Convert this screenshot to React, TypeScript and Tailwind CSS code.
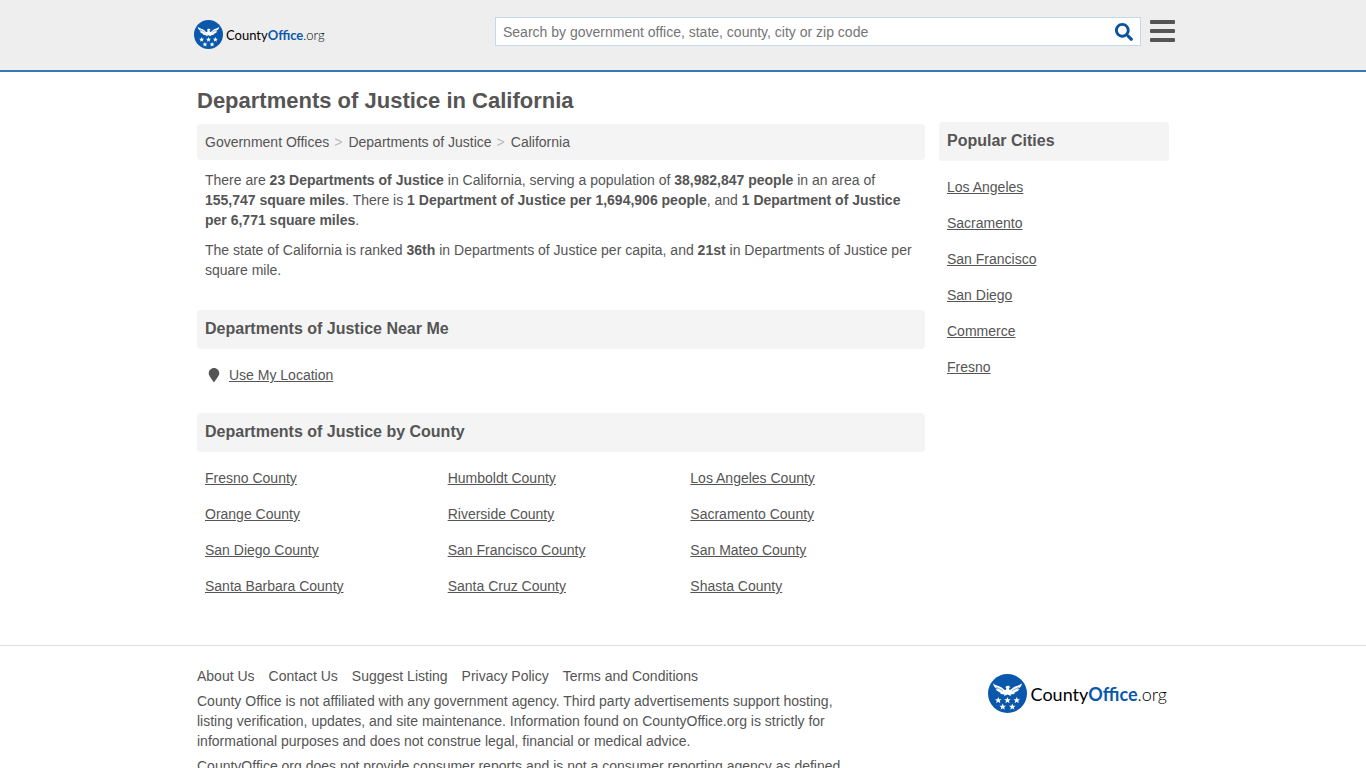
import { FaMapMarker, FaSearch } from "react-icons/fa";

const popularCities = [
  "Los Angeles",
  "Sacramento",
  "San Francisco",
  "San Diego",
  "Commerce",
  "Fresno",
];

const counties = [
  "Fresno County",
  "Humboldt County",
  "Los Angeles County",
  "Orange County",
  "Riverside County",
  "Sacramento County",
  "San Diego County",
  "San Francisco County",
  "San Mateo County",
  "Santa Barbara County",
  "Santa Cruz County",
  "Shasta County",
];

const footerLinks = [
  "About Us",
  "Contact Us",
  "Suggest Listing",
  "Privacy Policy",
  "Terms and Conditions",
];

// Centres of the five stars under the eagle
const stars = [
  [30, 77],
  [57, 77],
  [84, 77],
  [43, 96],
  [71, 96],
];

function Emblem({ className }: { className: string }) {
  return (
    <svg viewBox="0 0 114 114" className={className} aria-hidden="true">
      <circle cx="57" cy="57" r="57" fill="#0a58ab" />
      <g fill="#fff">
        {/* wings, then body and tail */}
        <path d="M15 27C21 34 31 34 39 39C45 43 47 48 52 47L52 59C45 61 37 59 33 54L39 54C31 53 25 50 22 44L30 45C21 41 15 36 15 27Z" />
        <path d="M99 27C93 34 83 34 75 39C69 43 67 48 62 47L62 59C69 61 77 59 81 54L75 54C83 53 89 50 92 44L84 45C93 41 99 36 99 27Z" />
        <path d="M51 40C52 33 62 32 66 39L61 40C61 44 65 48 65 53L67 64L57 60L47 64L50 53C50 48 53 45 54 41Z" />
        {stars.map(([x, y]) => (
          <polygon
            key={`${x}-${y}`}
            transform={`translate(${x} ${y})`}
            points="0,-10 2.6,-3.4 9.6,-3 4.2,1.4 6,8.2 0,4.4 -6,8.2 -4.2,1.4 -9.6,-3 -2.6,-3.4"
          />
        ))}
      </g>
      {/* gaps between the feathers */}
      <path
        d="M24 39C31 43 38 44 44 50M90 39C83 43 76 44 70 50"
        fill="none"
        stroke="#0a58ab"
        strokeWidth="1.5"
      />
    </svg>
  );
}

function SectionTitle({ children }: { children: string }) {
  return (
    <h2 className="rounded-sm bg-[#f4f4f4] px-2 pt-[9px] pb-[10px] text-base leading-5 font-bold">
      {children}
    </h2>
  );
}

function Separator() {
  return <span className="pr-px text-[#bbb]">&gt;</span>;
}

export default function App() {
  return (
    <div className="h-screen overflow-hidden bg-white font-['Liberation_Sans',Arial,sans-serif] text-sm leading-5 text-[#555]">
      <header className="border-b-2 border-[#337ab7] bg-[#eee]">
        <div className="mx-auto flex h-[70px] max-w-[984px] items-start pl-[3px]">
          <a href="#" className="mt-5 flex items-center gap-[3px] text-black">
            <Emblem className="size-[29px]" />
            <span className="font-[Lato,sans-serif] text-[13px]">
              County<b className="text-[#0a58ab]">Office</b>
              <span className="font-light">.org</span>
            </span>
          </a>
          <form className="mt-[17px] ml-auto flex h-[29px] w-[646px] border border-[#c3d9ea] bg-white">
            <input
              type="text"
              aria-label="Search"
              placeholder="Search by government office, state, county, city or zip code"
              className="min-w-0 flex-1 px-[7px] outline-none placeholder:text-[#757575]"
            />
            <button type="submit" aria-label="Submit search" className="px-[7px] text-[#0a529f]">
              <FaSearch size={18} />
            </button>
          </form>
          <button aria-label="Menu" className="mt-5 ml-[9px] flex w-[25px] flex-col gap-[5px]">
            <span className="h-1 w-full rounded-[1px] bg-[#555]" />
            <span className="h-1 w-full rounded-[1px] bg-[#555]" />
            <span className="h-1 w-full rounded-[1px] bg-[#555]" />
          </button>
        </div>
      </header>

      <div className="mx-auto flex max-w-[972px] gap-[14px]">
        <main className="min-w-0 flex-1">
          <h1 className="pt-[17px] pb-[11px] text-[22px] leading-6 font-bold">
            Departments of Justice in California
          </h1>
          <nav aria-label="Breadcrumb" className="flex gap-[5px] rounded-sm bg-[#f4f4f4] p-2">
            <a href="#">Government Offices</a>
            <Separator />
            <a href="#">Departments of Justice</a>
            <Separator />
            <a href="#">California</a>
          </nav>
          <div className="space-y-[10px] px-2 pt-[10px] pb-[30px]">
            <p>
              There are <b>23 Departments of Justice</b> in California, serving a
              population of <b>38,982,847 people</b> in an area of{" "}
              <b>155,747 square miles</b>. There is{" "}
              <b>1 Department of Justice per 1,694,906 people</b>, and{" "}
              <b>1 Department of Justice per 6,771 square miles</b>.
            </p>
            <p>
              The state of California is ranked <b>36th</b> in Departments of
              Justice per capita, and <b>21st</b> in Departments of Justice per
              square mile.
            </p>
          </div>

          <SectionTitle>Departments of Justice Near Me</SectionTitle>
          <div className="flex items-center gap-[6px] px-2 pt-4 pb-7">
            <FaMapMarker size={14} className="w-[18px]" />
            <a href="#" className="underline">
              Use My Location
            </a>
          </div>

          <SectionTitle>Departments of Justice by County</SectionTitle>
          <ul className="grid grid-cols-3 gap-y-4 pt-4">
            {counties.map((county) => (
              <li key={county} className="px-2">
                <a href="#" className="underline">
                  {county}
                </a>
              </li>
            ))}
          </ul>
        </main>

        <aside className="w-[230px] pt-[50px]">
          <SectionTitle>Popular Cities</SectionTitle>
          <ul className="space-y-4 px-2 pt-4">
            {popularCities.map((city) => (
              <li key={city}>
                <a href="#" className="underline">
                  {city}
                </a>
              </li>
            ))}
          </ul>
        </aside>
      </div>

      <footer className="mt-[49px] border-t border-[#ddd]">
        <div className="mx-auto flex max-w-[972px] items-start justify-between pt-5">
          <div className="max-w-[650px]">
            <nav aria-label="Footer" className="flex gap-[14px]">
              {footerLinks.map((link) => (
                <a key={link} href="#">
                  {link}
                </a>
              ))}
            </nav>
            <p className="pt-[5px]">
              County Office is not affiliated with any government agency. Third
              party advertisements support hosting, listing verification,
              updates, and site maintenance. Information found on
              CountyOffice.org is strictly for informational purposes and does
              not construe legal, financial or medical advice.
            </p>
            <p className="pt-[5px]">
              CountyOffice.org does not provide consumer reports and is not a
              consumer reporting agency as defined
            </p>
          </div>
          <a href="#" className="mt-2 mr-0.5 flex items-center gap-1 text-black">
            <Emblem className="size-[39px]" />
            <span className="font-[Lato,sans-serif] text-lg">
              County<b className="text-[#0a58ab]">Office</b>
              <span className="font-light">.org</span>
            </span>
          </a>
        </div>
      </footer>
    </div>
  );
}
